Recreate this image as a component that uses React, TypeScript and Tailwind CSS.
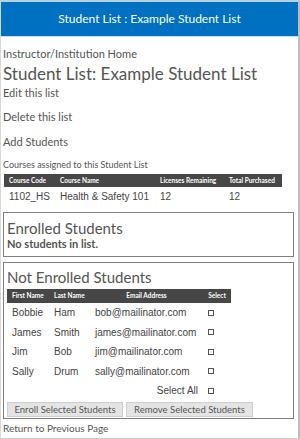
const courses = [
  { code: "1102_HS", name: "Health & Safety 101", remaining: "12", total: "12" },
];

const students = [
  { first: "Bobbie", last: "Ham", email: "bob@mailinator.com" },
  { first: "James", last: "Smith", email: "james@mailinator.com" },
  { first: "Jim", last: "Bob", email: "jim@mailinator.com" },
  { first: "Sally", last: "Drum", email: "sally@mailinator.com" },
];

function Checkbox() {
  return <span className="inline-block w-[6px] h-[6px] border border-[#555] bg-white"></span>;
}

export default function App() {
  return (
    <div className="w-[300px] h-[439px] bg-white border-l border-l-[#d9d9d9] border-r-2 border-r-[#bdbdbd] border-t-2 border-t-[#b9cfe2] border-b border-b-[#cfcfcf] overflow-hidden font-['Lato',sans-serif] text-[#555]">
      {/* Header */}
      <div className="h-[35px] bg-[#0070c0] border-b border-b-[#bfe0f5] flex items-center justify-center text-white text-[12px]">
        Student List : Example Student List
      </div>

      <div className="pl-[2px]">
        <div className="mt-[10px] text-[11px] leading-[14px]">Instructor/Institution Home</div>
        <h1 className="mt-[3px] text-[17px] leading-[20px]">Student List: Example Student List</h1>
        <div className="mt-[2px] text-[11px] leading-[14px]">Edit this list</div>
        <div className="mt-[10px] text-[11px] leading-[14px]">Delete this list</div>
        <div className="mt-[11px] text-[11px] leading-[14px]">Add Students</div>
        <div className="mt-[10px] text-[9px] leading-[12px]">Courses assigned to this Student List</div>

        {/* Courses table */}
        <div className="mt-[3px] ml-[1px] w-[278px]">
          <div className="grid grid-cols-[51px_100px_69px_58px] h-[13px] items-center bg-[#474747] text-white text-[6.5px] font-bold">
            <div className="pl-[5px]">Course Code</div>
            <div className="pl-[5px]">Course Name</div>
            <div className="pl-[5px]">Licenses Remaining</div>
            <div className="pl-[5px]">Total Purchased</div>
          </div>
          {courses.map((c) => (
            <div
              key={c.code}
              className="grid grid-cols-[51px_100px_69px_58px] h-[19px] items-center font-['Liberation_Sans',Arial,sans-serif] text-[10px] text-[#444]"
            >
              <div className="pl-[5px]">{c.code}</div>
              <div className="pl-[5px]">{c.name}</div>
              <div className="pl-[5px]">{c.remaining}</div>
              <div className="pl-[5px]">{c.total}</div>
            </div>
          ))}
        </div>

        {/* Enrolled */}
        <div className="mt-[6px] w-[291px] border border-[#808080] pl-[3px] pt-[6px] pb-[6px]">
          <div className="text-[15px] leading-[18px]">Enrolled Students</div>
          <div className="text-[11px] leading-[13px] font-bold">No students in list.</div>
        </div>

        {/* Not enrolled */}
        <div className="mt-[5px] w-[291px] border border-[#808080] pl-[3px] pt-[5px] pb-[1px]">
          <div className="text-[15px] leading-[18px]">Not Enrolled Students</div>
          <div className="mt-[3px] w-[224px]">
            <div className="grid grid-cols-[42px_41px_113px_28px] h-[14px] items-center bg-[#474747] text-white text-[6.5px] font-bold">
              <div className="pl-[5px]">First Name</div>
              <div className="pl-[5px]">Last Name</div>
              <div className="text-center">Email Address</div>
              <div className="text-center">Select</div>
            </div>
            {students.map((s) => (
              <div
                key={s.email}
                className="grid grid-cols-[42px_41px_113px_28px] h-[19.5px] items-center font-['Liberation_Sans',Arial,sans-serif] text-[10px] text-[#444]"
              >
                <div className="pl-[5px]">{s.first}</div>
                <div className="pl-[5px]">{s.last}</div>
                <div className="pl-[5px]">{s.email}</div>
                <div className="pl-[5px] flex items-center">
                  <Checkbox />
                </div>
              </div>
            ))}
            <div className="grid grid-cols-[196px_28px] h-[19.5px] items-center font-['Liberation_Sans',Arial,sans-serif] text-[10px] text-[#444]">
              <div className="text-right pr-[5px]">Select All</div>
              <div className="pl-[5px] flex items-center">
                <Checkbox />
              </div>
            </div>
          </div>
          <div className="mt-[1.5px] flex gap-[3px]">
            <button className="h-[15px] w-[116px] bg-[#e4e4e4] border border-[#cfcfcf] text-[9.5px] text-[#555] leading-none">
              Enroll Selected Students
            </button>
            <button className="h-[15px] w-[127px] bg-[#e4e4e4] border border-[#cfcfcf] text-[9.5px] text-[#555] leading-none">
              Remove Selected Students
            </button>
          </div>
        </div>

        <div className="mt-[2px] text-[10px] leading-[14px]">Return to Previous Page</div>
      </div>
    </div>
  );
}
